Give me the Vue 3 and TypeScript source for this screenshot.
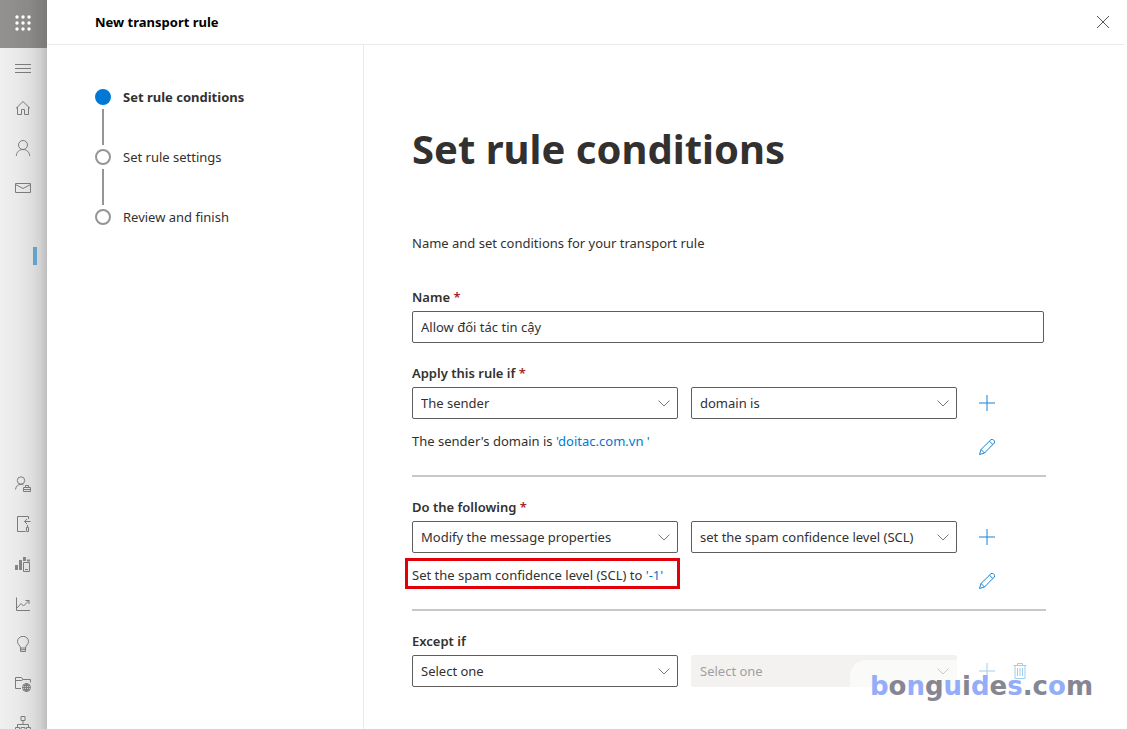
<script setup lang="ts">
import { ref } from 'vue'

type StepState = 'current' | 'upcoming'
interface Step { label: string; state: StepState }
interface Letter { char: string; tone: 'blue' | 'gray' }

const steps: Step[] = [
  { label: 'Set rule conditions', state: 'current' },
  { label: 'Set rule settings', state: 'upcoming' },
  { label: 'Review and finish', state: 'upcoming' },
]

const ruleName = ref('Allow đối tác tin cậy')
const condition = ref('The sender')
const conditionDetail = ref('domain is')
const action = ref('Modify the message properties')
const actionDetail = ref('set the spam confidence level (SCL)')
const exception = ref('Select one')
const exceptionDetail = ref('Select one')

const blueLetters = [0, 2, 4, 6, 8, 11]
const brand: Letter[] = Array.from('bonguides.com').map((char, i) => ({
  char,
  tone: blueLetters.includes(i) ? 'blue' : 'gray',
}))
</script>

<template>
  <div class="page">
    <aside class="rail">
      <button class="launcher" type="button" aria-label="App launcher">
        <svg width="16" height="16" viewBox="0 0 16 16" fill="#fff">
          <template v-for="r in 3" :key="r">
            <circle v-for="c in 3" :key="c" :cx="c * 6 - 4" :cy="r * 6 - 4" r="1.7" />
          </template>
        </svg>
      </button>
      <nav class="rail-nav" aria-label="Admin center">
        <div class="rail-group">
          <button class="rail-item" type="button" aria-label="Collapse navigation">
            <svg viewBox="0 0 16 16"><path d="M0 4.5h16M0 8.5h16M0 12.5h16" /></svg>
          </button>
          <a class="rail-item" href="#home" aria-label="Home">
            <svg viewBox="0 0 16 16"><path d="M1 8.4 8 1.5l7 6.9M2.5 7v7.5h4v-5h3v5h4V7" /></svg>
          </a>
          <a class="rail-item" href="#recipients" aria-label="Recipients">
            <svg viewBox="0 0 16 16"><circle cx="8" cy="5" r="4.5" /><path d="M1.3 16c.2-4 3-6.5 6.7-6.5s6.5 2.5 6.7 6.5" /></svg>
          </a>
          <a class="rail-item" href="#mail" aria-label="Mail flow">
            <svg viewBox="0 0 16 16"><path d="M.5 3.5h15v9H.5zM.5 4.5 8 8.5l7.5-4" /></svg>
          </a>
        </div>
        <a class="rail-selected" href="#rules" aria-label="Rules"><span></span></a>
        <div class="rail-group">
          <a class="rail-item" href="#roles" aria-label="Roles">
            <svg viewBox="0 0 16 16"><circle cx="6" cy="4.5" r="3.7" /><path d="M.5 13.5c.3-3.2 2.5-5.2 5.5-5.2 1 0 1.8.2 2.500.7M8.500 11.500h7v4h-7zM8.500 13.500h7M10.500 11.500v-2h3v2" /></svg>
          </a>
          <a class="rail-item" href="#migration" aria-label="Migration">
            <svg viewBox="0 0 16 16"><path d="M13.500 3V.5h-11v15h8M15.500 5.500h-6M12 3 9.500 5.500 12 8M12.500 9v2M11.500 11.500h2v4h-2z" /></svg>
          </a>
          <a class="rail-item" href="#reports" aria-label="Reports">
            <svg viewBox="0 0 16 16"><g class="solid"><path d="M0 9h3v5H0zM4 4h3v10H4zM8 1h3v4H8zM12 3.500h3v2h-3z" /></g><path d="M8.500 6.500h6v9h-6zM10 13.500h3" /></svg>
          </a>
          <a class="rail-item" href="#insights" aria-label="Insights">
            <svg viewBox="0 0 16 16"><path d="M1.500 1.500v13H15M2 12l4-4.500 2.500 2.500L14 4.500M10.500 4.500H14V8" /></svg>
          </a>
          <a class="rail-item" href="#training" aria-label="Training">
            <svg viewBox="0 0 16 16"><path d="M5.500 12c0-2.500-3-3.500-3-6.500a5.500 5.200 0 0 1 11 0c0 3-3 4-3 6.500zM5.500 12v3.500h5V12M5.500 13.700h5" /></svg>
          </a>
          <a class="rail-item" href="#folders" aria-label="Public folders">
            <svg viewBox="0 0 16 16"><path d="M6 12.500H.5v-11h6l1.500 2h7.500v3M.5 4.500h6L8 3.500" /><circle cx="11.500" cy="11.500" r="4" /><path d="M7.500 11.500h8M11.500 7.500v8M8.300 9.500h6.400M8.300 13.500h6.400" /><ellipse cx="11.500" cy="11.500" rx="2" ry="4" /></svg>
          </a>
          <a class="rail-item" href="#organization" aria-label="Organization">
            <svg viewBox="0 0 16 16"><path d="M6 .5h4v4H6zM8 4.500v4M2.500 11V8.500h11V11M.5 11.500h4v4h-4zM6 11.500h4v4H6zM11.500 11.500h4v4h-4z" /></svg>
          </a>
        </div>
      </nav>
    </aside>

    <section class="panel">
      <header class="panel-header">
        <h2>New transport rule</h2>
        <button class="close" type="button" aria-label="Close">
          <svg width="12" height="12" viewBox="0 0 12 12"><path d="M0 0l12 12M12 0 0 12" /></svg>
        </button>
      </header>

      <div class="panel-body">
        <ol class="steps">
          <li v-for="step in steps" :key="step.label" :class="['step', step.state]">
            <span class="marker"></span>
            <span>{{ step.label }}</span>
          </li>
        </ol>

        <main class="content">
          <h1>Set rule conditions</h1>
          <p class="intro">Name and set conditions for your transport rule</p>

          <form @submit.prevent>
            <div class="name-field">
              <label for="rule-name">Name <i>*</i></label>
              <input id="rule-name" v-model="ruleName" type="text" />
            </div>

            <div class="rule">
              <label for="condition">Apply this rule if <i>*</i></label>
              <div class="row">
                <div class="select">
                  <select id="condition" v-model="condition"><option>The sender</option></select>
                  <svg viewBox="0 0 12 7"><path d="M.5.5 6 6 11.5.5" /></svg>
                </div>
                <div class="select">
                  <select v-model="conditionDetail" aria-label="Condition property"><option>domain is</option></select>
                  <svg viewBox="0 0 12 7"><path d="M.5.5 6 6 11.5.5" /></svg>
                </div>
                <div class="tools">
                  <button type="button" aria-label="Add condition"><svg viewBox="0 0 16 16"><path d="M8 0v16M0 8h16" /></svg></button>
                </div>
              </div>
              <div class="row summary">
                <p>The sender's domain is <a href="#domain">'doitac.com.vn '</a></p>
                <div class="tools">
                  <button type="button" aria-label="Edit condition"><svg class="pencil" viewBox="0 0 16 16"><path d="M.5 15.500 2 10.500 11.800.9a1.900 1.900 0 0 1 2.700 0l.6.6a1.900 1.900 0 0 1 0 2.700L5.500 14zM2 10.500 5.500 14M10.500 2.200l3.300 3.300" /></svg></button>
                </div>
              </div>
            </div>

            <div class="rule">
              <label for="action">Do the following <i>*</i></label>
              <div class="row">
                <div class="select">
                  <select id="action" v-model="action"><option>Modify the message properties</option></select>
                  <svg viewBox="0 0 12 7"><path d="M.5.5 6 6 11.5.5" /></svg>
                </div>
                <div class="select">
                  <select v-model="actionDetail" aria-label="Action property"><option>set the spam confidence level (SCL)</option></select>
                  <svg viewBox="0 0 12 7"><path d="M.5.5 6 6 11.5.5" /></svg>
                </div>
                <div class="tools">
                  <button type="button" aria-label="Add action"><svg viewBox="0 0 16 16"><path d="M8 0v16M0 8h16" /></svg></button>
                </div>
              </div>
              <div class="row summary">
                <p><span class="marked">Set the spam confidence level (SCL) to <a href="#scl">'-1'</a></span></p>
                <div class="tools">
                  <button type="button" aria-label="Edit action"><svg class="pencil" viewBox="0 0 16 16"><path d="M.5 15.500 2 10.500 11.800.9a1.900 1.900 0 0 1 2.700 0l.6.6a1.900 1.900 0 0 1 0 2.700L5.500 14zM2 10.500 5.500 14M10.500 2.200l3.300 3.300" /></svg></button>
                </div>
              </div>
            </div>

            <div class="rule">
              <label for="exception">Except if</label>
              <div class="row">
                <div class="select">
                  <select id="exception" v-model="exception"><option>Select one</option></select>
                  <svg viewBox="0 0 12 7"><path d="M.5.5 6 6 11.5.5" /></svg>
                </div>
                <div class="select">
                  <select v-model="exceptionDetail" aria-label="Exception property" disabled><option>Select one</option></select>
                  <svg viewBox="0 0 12 7"><path d="M.5.5 6 6 11.5.5" /></svg>
                </div>
                <div class="tools">
                  <button type="button" aria-label="Add exception"><svg viewBox="0 0 16 16"><path d="M8 0v16M0 8h16" /></svg></button>
                  <button type="button" aria-label="Delete exception"><svg viewBox="0 0 16 16"><path d="M1.500 2.500h13M5.500 2.500v-2h5v2M3 2.500v13h10v-13M5.500 5v8M8 5v8M10.500 5v8" /></svg></button>
                </div>
              </div>
            </div>
          </form>
        </main>
      </div>
    </section>

    <div class="watermark"><span v-for="(letter, i) in brand" :key="i" :class="letter.tone">{{ letter.char }}</span></div>
  </div>
</template>

<style>
body {
  margin: 0;
  background: #fff;
}
</style>

<style scoped>
* {
  box-sizing: border-box;
}
.page {
  position: relative;
  display: flex;
  height: 100vh;
  overflow: hidden;
  color: #323130;
  font-family: "Noto Sans", "Open Sans", sans-serif;
  font-size: 13px;
  line-height: 20px;
}
button {
  padding: 0;
  border: 0;
  background: none;
}
svg {
  display: block;
  fill: none;
}
.rail {
  flex: 0 0 47px;
  background: linear-gradient(90deg, #f0f0f0 0%, #e9e9e9 40%, #dedede 68%, #d2d2d2 85%, #bebebe 100%);
}
.launcher {
  display: grid;
  place-items: center;
  width: 100%;
  height: 48px;
  padding: 0 2px 2px 0;
  background: linear-gradient(90deg, #949291 0%, #8c8a89 60%, #7c7a79 100%);
}
.launcher svg {
  fill: #fff;
}
.rail-item {
  display: grid;
  place-items: center;
  width: 100%;
  height: 40px;
  padding-right: 2px;
}
.rail-item svg {
  width: 16px;
  height: 16px;
  stroke: #7b7b7b;
}
.rail-item .solid {
  fill: #858585;
  stroke: none;
}
.rail-selected {
  display: flex;
  align-items: center;
  justify-content: flex-end;
  height: 96px;
  margin-bottom: 160px;
  padding-right: 10px;
}
.rail-selected span {
  width: 4px;
  height: 18px;
  background: #64a2cb;
}
.panel {
  display: flex;
  flex: 1;
  flex-direction: column;
  min-width: 0;
  margin-right: 3px;
}
.panel-header {
  display: flex;
  align-items: center;
  justify-content: space-between;
  height: 45px;
  padding: 0 15px 0 48px;
  border-bottom: 1px solid #eaeaea;
}
h2 {
  margin: 0;
  color: #000;
  font-size: 13px;
  font-weight: 700;
}
.close svg {
  stroke: #555;
}
.panel-body {
  display: flex;
  flex: 1;
  min-height: 0;
}
.steps {
  flex: 0 0 317px;
  margin: 0;
  padding: 42px 24px 0 48px;
  border-right: 1px solid #eaeaea;
  list-style: none;
}
.step {
  position: relative;
  display: flex;
  align-items: flex-start;
  gap: 12px;
  height: 60px;
}
.step:not(:last-child)::after {
  position: absolute;
  top: 22px;
  left: 7px;
  width: 2px;
  height: 36px;
  background: #979593;
  content: "";
}
.marker {
  width: 16px;
  height: 16px;
  margin-top: 2px;
  border: 2px solid #979593;
  border-radius: 50%;
}
.current {
  font-weight: 700;
}
.current .marker {
  border-color: #0078d4;
  background: #0078d4;
}
.content {
  flex: 1;
  min-width: 0;
  padding: 76px 78px 0 48px;
}
h1 {
  margin: 0;
  font-size: 40px;
  font-weight: 700;
  line-height: 56px;
}
.intro {
  margin: 56px 0 34px;
}
label {
  display: block;
  margin-bottom: 4px;
  font-weight: 600;
}
label i {
  color: #a4262c;
  font-style: normal;
}
.name-field {
  margin-bottom: 20px;
  padding-right: 2px;
}
input,
select {
  display: block;
  width: 100%;
  height: 32px;
  padding: 0 8px;
  border: 1px solid #605e5c;
  border-radius: 2px;
  outline: 0;
  background: #fff;
  color: #323130;
  font: inherit;
}
select {
  padding-right: 28px;
  appearance: none;
}
select:disabled {
  border-color: #f3f2f1;
  background: #f3f2f1;
  color: #a19f9d;
  opacity: 1;
}
.select {
  position: relative;
}
.select svg {
  position: absolute;
  top: 13px;
  right: 8px;
  width: 12px;
  height: 7px;
  pointer-events: none;
  stroke: #7a7876;
}
.row {
  display: grid;
  grid-template-columns: minmax(0, 1fr) minmax(0, 1fr) 76px;
  gap: 13px;
}
.summary {
  margin-top: 12px;
}
.summary p {
  grid-column: span 2;
  margin: 0;
}
.summary a {
  color: #0078d4;
  text-decoration: none;
}
.marked {
  position: relative;
}
.marked::after {
  position: absolute;
  inset: -8px -17px -5px -7px;
  border: 3px solid #e3000b;
  content: "";
}
.tools {
  display: flex;
}
.tools button {
  display: grid;
  place-items: center;
  width: 33px;
  height: 32px;
}
.tools svg {
  width: 16px;
  height: 16px;
  stroke: #1583d6;
}
.rule {
  margin-bottom: 20px;
  padding-bottom: 12px;
  border-bottom: 2px solid #c8c8c8;
}
.rule:last-child {
  border-bottom: 0;
}
.watermark {
  position: absolute;
  right: 14px;
  bottom: 19px;
  padding: 10px 20px 8px;
  border-radius: 16px;
  background: rgba(255, 255, 255, 0.6);
  font-family: "DejaVu Sans", sans-serif;
  font-size: 26px;
  font-weight: 700;
  line-height: 32px;
}
.blue {
  color: #94adf8;
}
.gray {
  color: #858692;
}
</style>
